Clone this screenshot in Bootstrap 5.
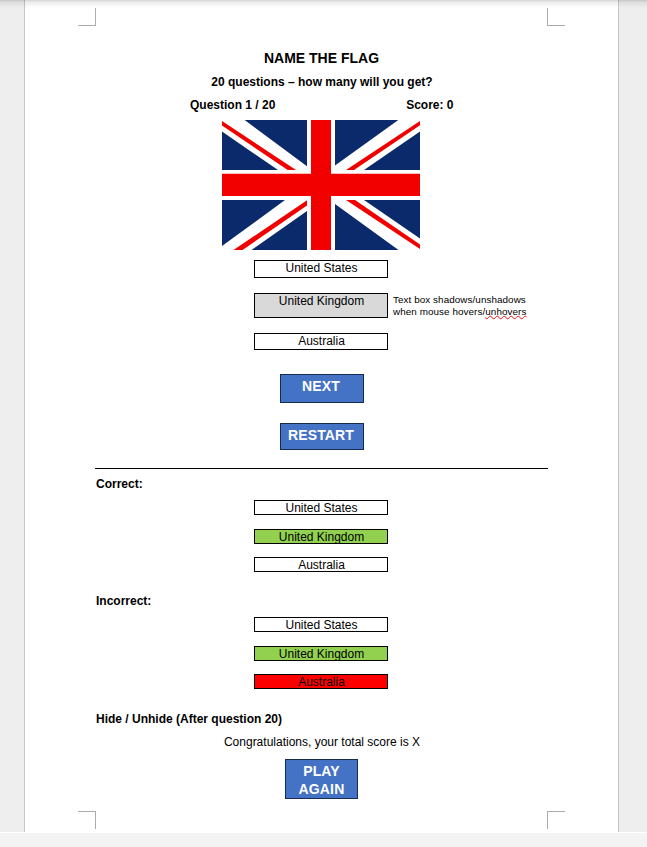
<!DOCTYPE html>
<html lang="en">
<head>
<meta charset="utf-8">
<meta name="viewport" content="width=device-width, initial-scale=1">
<title>Name the Flag</title>
<link href="https://cdn.jsdelivr.net/npm/bootstrap@5.3.0/dist/css/bootstrap.min.css" rel="stylesheet">
<style>
body{background:#f3f3f3;font-family:"Liberation Sans",Arial,sans-serif;font-size:12px;line-height:14px;color:#000;height:847px;overflow:hidden}
.desk{height:833px;background:#eee;border-bottom:1px solid #fff}
.desk-shade{height:8px;background:linear-gradient(rgba(0,0,0,.16),rgba(0,0,0,.07) 30%,rgba(0,0,0,0))}
.sheet{width:595px;height:832px;margin-left:24px;background:#fff;border:solid #c6c6c6;border-width:0 1px;padding:50px 70px 0}
.crop-mark{width:18px;height:18px;border:0 solid #ababab}
.crop-tl{left:78px;top:8px;border-width:0 1px 1px 0}
.crop-tr{left:547px;top:8px;border-width:0 0 1px 1px}
.crop-bl{left:78px;top:811px;border-width:1px 1px 0 0}
.crop-br{left:547px;top:811px;border-width:1px 0 0 1px}
h1{font-size:14px;line-height:16px;margin:0 0 9px}
h2{font-size:12px;line-height:14px;margin:0;padding-left:1px}
.status{width:263.5px;margin:9px 0 8px 95px}
.flag{width:198px;height:130px;margin:0 0 10px 127px}
.choice{width:134px;height:15px;border:1px solid #000;line-height:14px;margin-left:159px;padding-left:1px;text-align:center}
.tight{line-height:15px}
.tall{height:18px}
.hovered{height:25px;background:#d9d9d9}
.third{height:17px}
.right-answer{background:#92d050;margin-top:14px;margin-bottom:13px}
.wrong-answer{background:#f00}
.hover-row{margin:15px 0}
.hint{font-size:9.85px;line-height:12px;margin-left:5px;padding-top:1px;height:25px;letter-spacing:.08px;white-space:nowrap}
.squiggle{text-decoration:underline wavy #e81313 1px;text-underline-offset:0;text-decoration-skip-ink:none}
.quiz-btn{display:flex;justify-content:center;align-items:flex-start;width:84px;height:29px;margin-left:185px;border:1px solid #172c51;border-radius:0;background:#4472c4;color:#fff;font-size:14px;font-weight:700;line-height:16px;letter-spacing:.15px;padding:3px 2px 0 0}
.restart{height:27px;margin-top:20px}
.again{width:73px;height:40px;margin-left:190px;line-height:18px;padding:2px 10px 0}
.divider{height:1px;background:#000;margin:18px 0 8px}
.stack{margin:9px 0 22px}
.stack-last{margin-bottom:23px}
.total{margin:9px 0 10px;padding-left:1px}
</style>
</head>
<body>
<div class="desk position-relative">
  <main class="sheet">
    <h1 class="text-center fw-bold">NAME THE FLAG</h1>
    <h2 class="text-center fw-bold">20 questions – how many will you get?</h2>
    <div class="status d-flex justify-content-between fw-bold"><span>Question 1 / 20</span><span>Score: 0</span></div>
    <svg class="flag d-block" viewBox="0 0 198 130" role="img" aria-label="Flag">
      <rect width="198" height="130" fill="#fff"/>
      <path fill="#0a2a6c" d="M22.7 0H85V46.3ZM0 11.5 56 50H0ZM113 0H176.3L113 45.5ZM198 11.5V50H142ZM0 80H63L0 126ZM29.5 130 85 91V130ZM142 80H198V118.5ZM113 84V130H176.5Z"/>
      <path fill="#f20000" d="M0 1 74 50H65.7L0 5.5ZM124 50H132L198 5.3V1ZM11.5 130H20.5L85 85.5V80.3ZM124 80H133L198 124.5V129ZM89 0H109V53.8H198V76H109V130H89V76H0V53.8H89Z"/>
    </svg>
    <div class="choice tall">United States</div>
    <div class="hover-row d-flex">
      <div class="choice hovered">United Kingdom</div>
      <div class="hint">Text box shadows/unshadows<br>when mouse hovers/<span class="squiggle">unhovers</span></div>
    </div>
    <div class="choice third">Australia</div>
    <button type="button" class="btn quiz-btn mt-4">NEXT</button>
    <button type="button" class="btn quiz-btn restart">RESTART</button>
    <div class="divider"></div>

    <h2 class="fw-bold">Correct:</h2>
    <div class="stack">
      <div class="choice tight">United States</div>
      <div class="choice tight right-answer">United Kingdom</div>
      <div class="choice tight">Australia</div>
    </div>

    <h2 class="fw-bold">Incorrect:</h2>
    <div class="stack stack-last">
      <div class="choice tight">United States</div>
      <div class="choice tight right-answer">United Kingdom</div>
      <div class="choice tight wrong-answer">Australia</div>
    </div>

    <h2 class="fw-bold">Hide / Unhide (After question 20)</h2>
    <p class="total text-center">Congratulations, your total score is X</p>
    <button type="button" class="btn quiz-btn again">PLAY AGAIN</button>
  </main>
  <div class="desk-shade position-absolute top-0 start-0 w-100"></div>
  <span class="crop-mark crop-tl position-absolute"></span>
  <span class="crop-mark crop-tr position-absolute"></span>
  <span class="crop-mark crop-bl position-absolute"></span>
  <span class="crop-mark crop-br position-absolute"></span>
</div>
<script src="https://cdn.jsdelivr.net/npm/bootstrap@5.3.0/dist/js/bootstrap.bundle.min.js"></script>
</body>
</html>
